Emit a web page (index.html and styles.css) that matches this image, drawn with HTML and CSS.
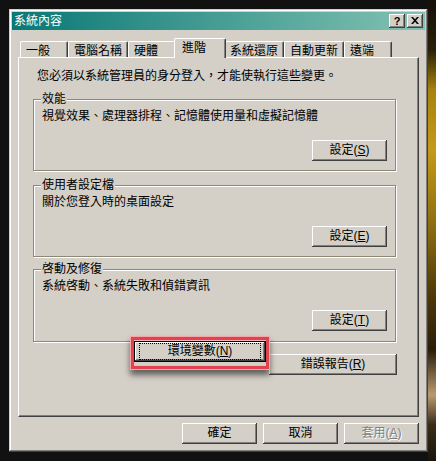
FILE: index.html
```html
<!DOCTYPE html>
<html lang="zh-Hant">
<head>
  <meta charset="UTF-8" />
  <title>系統內容</title>
  <link rel="stylesheet" href="styles.css">
</head>
<body>

  <div class="window">
    <!-- 標題列 -->
    <div class="titlebar">
      <span class="title-text">系統內容</span>
      <div class="caption-buttons">
        <span class="caption-btn help">?</span>
        <span class="caption-btn close">
          <svg width="8" height="7" viewBox="0 0 8 7">
            <path d="M0 0h2l2 2.2L6 0h2L5 3.5 8 7H6L4 4.8 2 7H0l3-3.5z" fill="#000"/>
          </svg>
        </span>
      </div>
    </div>

    <!-- 分頁 -->
    <div class="tabs">
      <div class="tab">一般</div>
      <div class="tab">電腦名稱</div>
      <div class="tab">硬體</div>
      <div class="tab tab-active">進階</div>
      <div class="tab">系統還原</div>
      <div class="tab">自動更新</div>
      <div class="tab">遠端</div>
    </div>

    <div class="panel">
      <p class="intro">您必須以系統管理員的身分登入，才能使執行這些變更。</p>

      <div class="group">
        <div class="group-title">效能</div>
        <div class="group-desc">視覺效果、處理器排程、記憶體使用量和虛擬記憶體</div>
        <div class="group-actions">
          <button class="btn">設定(<u>S</u>)</button>
        </div>
      </div>

      <div class="group group-second">
        <div class="group-title">使用者設定檔</div>
        <div class="group-desc">關於您登入時的桌面設定</div>
        <div class="group-actions">
          <button class="btn">設定(<u>E</u>)</button>
        </div>
      </div>

      <div class="group group-third">
        <div class="group-title">啓動及修復</div>
        <div class="group-desc">系統啓動、系統失敗和偵錯資訊</div>
        <div class="group-actions">
          <button class="btn">設定(<u>T</u>)</button>
        </div>
      </div>

      <div class="extra-row">
        <div class="highlight">
          <button class="btn btn-default"><span class="focus">環境變數(<u>N</u>)</span></button>
        </div>
        <button class="btn btn-wide">錯誤報告(<u>R</u>)</button>
      </div>
    </div>

    <!-- 對話方塊按鈕 -->
    <div class="dialog-buttons">
      <button class="btn">確定</button>
      <button class="btn">取消</button>
      <button class="btn btn-disabled">套用(<u>A</u>)</button>
    </div>
  </div>

</body>
</html>
```

FILE: styles.css
```css
html {
  background-color: #111;
  background-image:
    linear-gradient(90deg, #111 0, #111 428px, transparent 428px),
    linear-gradient(180deg, #15110a 0, #2a2008 50px, #a8820e 90px, #c49a18 150px, #8a6a10 230px, #4a3608 300px, #2a1e0a 350px, #b89a70 395px, #3a2c18 425px, #1a140c 461px);
}

body {
  margin: 0;
  height: 461px;
  overflow: hidden;
  font-family: "Liberation Sans", "Noto Sans CJK TC", sans-serif;
  font-size: 12px;
  line-height: 12px;
  color: #000;
}

.window {
  margin: 9px 0 0 9px;
  width: 419px;
  height: 443px;
  box-sizing: border-box;
  padding: 3px;
  background-color: #d4d0c8;
  box-shadow: inset -1px -1px #404040, inset 1px 1px #d4d0c8, inset -2px -2px #808080, inset 2px 2px #fff;
}

/* 標題列 */
.titlebar {
  height: 18px;
  display: flex;
  align-items: center;
  padding: 0 2px 0 2px;
  background: linear-gradient(90deg, #0a7876, #82c2b2);
  color: #fff;
}

.title-text {
  line-height: 18px;
}

.caption-buttons {
  margin-left: auto;
  display: flex;
  gap: 2px;
}

.caption-btn {
  width: 16px;
  height: 14px;
  box-sizing: border-box;
  display: flex;
  align-items: center;
  justify-content: center;
  background-color: #d4d0c8;
  color: #000;
  box-shadow: inset -1px -1px #404040, inset 1px 1px #fff, inset -2px -2px #808080, inset 2px 2px #d4d0c8;
}

.caption-btn.help {
  font-weight: bold;
  font-size: 11px;
  line-height: 14px;
  padding-bottom: 1px;
}

.caption-btn.close svg {
  display: block;
  margin-top: -1px;
}

/* 分頁 */
.tabs {
  display: flex;
  align-items: flex-end;
  margin: 8px 0 0 8px;
  height: 19px;
}

.tab {
  position: relative;
  height: 16px;
  min-width: 48px;
  box-sizing: border-box;
  padding: 2px 5px 0 5px;
  line-height: 14px;
  border-top: 1px solid #fff;
  border-left: 1px solid #fff;
  border-right: 1px solid #404040;
  border-radius: 2px 2px 0 0;
  box-shadow: inset -1px 0 #808080;
  background-color: #d4d0c8;
  white-space: nowrap;
}

.tab-active {
  z-index: 2;
  height: 20px;
  min-width: 52px;
  margin: 0 -2px -1px -2px;
  padding: 2px 7px 0 7px;
}

/* 內容面板 */
.panel {
  margin-left: 6px;
  width: 401px;
  height: 360px;
  box-sizing: border-box;
  border-top: 1px solid #fff;
  border-left: 1px solid #fff;
  border-right: 1px solid #404040;
  border-bottom: 1px solid #404040;
  box-shadow: inset -1px -1px #808080;
}

.intro {
  margin: 12px 0 0 18px;
}

.group {
  margin: 17px 0 0 14px;
  width: 363px;
  height: 72px;
  box-sizing: border-box;
  padding: 0 8px;
  border: 1px solid #8c8878;
  box-shadow: 1px 1px 0 #fff, inset 1px 1px 0 #fff;
}

.group-second {
  margin-top: 14px;
}

.group-third {
  margin-top: 12px;
  height: 73px;
}

.group-title {
  width: max-content;
  margin: -7px 0 0 -1px;
  padding: 0 1px;
  background-color: #d4d0c8;
}

.group-desc {
  margin-top: 5px;
}

.group-actions {
  display: flex;
  justify-content: flex-end;
  margin-top: 18px;
}

/* 按鈕 */
.btn {
  width: 75px;
  height: 21px;
  padding: 0;
  border: 0;
  font: inherit;
  line-height: 19px;
  color: #000;
  background-color: #d4d0c8;
  box-shadow: inset -1px -1px #404040, inset 1px 1px #fff, inset -2px -2px #808080, inset 2px 2px #d4d0c8;
}

.btn u {
  text-underline-offset: 1px;
}

.btn-wide {
  width: 128px;
  margin-top: 12px;
}

.btn-default {
  width: 132px;
  border: 1px solid #000;
  display: block;
}

.focus {
  display: block;
  margin: 1px 4px;
  border: 1px dotted #000;
  line-height: 15px;
}

.btn-disabled {
  color: #808080;
  text-shadow: 1px 1px 0 #fff;
}

/* 環境變數 標示框 */
.extra-row {
  display: flex;
  align-items: flex-start;
  margin-left: 112px;
}

.highlight {
  position: relative;
  z-index: 1;
  margin-top: -5px;
  padding: 1px 0 4px 0;
  border: 3px solid #e2414e;
  background-color: #d4d0c8;
  box-shadow: 0 0 0 1px #f3a6ab, inset 0 0 0 1px #f5b9bc, 0 5px 6px 1px rgba(0, 0, 0, 0.55);
}

.dialog-buttons {
  display: flex;
  justify-content: flex-end;
  gap: 6px;
  margin-top: 6px;
  padding-right: 6px;
}
```
